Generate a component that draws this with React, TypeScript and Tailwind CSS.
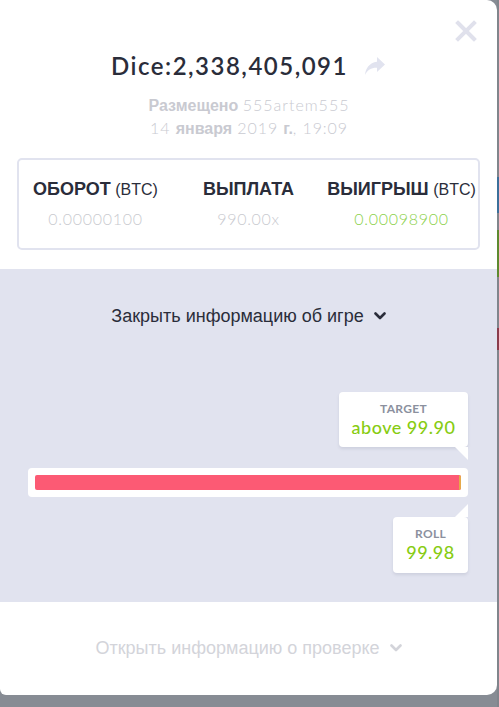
const Chevron = ({ className }: { className?: string }) => (
  <svg width="12" height="8" viewBox="0 0 12 8" className={className} aria-hidden="true">
    <path d="M1.5 1.5L6 6l4.5-4.5" fill="none" stroke="currentColor" strokeWidth="2.6" strokeLinecap="round" strokeLinejoin="round" />
  </svg>
)

const Share = () => (
  <svg width="22" height="20" viewBox="0 0 22 20" aria-hidden="true">
    <path d="M13 1l8 7.5-8 7.5v-4.3C7 11.6 3.6 13.6 1 19c.6-6.8 4.2-12.2 12-13.3z" fill="#e1e3ef" />
  </svg>
)

const Close = () => (
  <svg width="22" height="22" viewBox="0 0 22 22" aria-hidden="true">
    <path d="M3 3l16 16M19 3L3 19" stroke="#e0e1ec" strokeWidth="4" strokeLinecap="square" />
  </svg>
)

function Stat({ label, unit, value, green }: { label: string; unit?: string; value: string; green?: boolean }) {
  return (
    <div className="flex flex-col items-center">
      <div className="whitespace-nowrap font-['Liberation_Sans',sans-serif] leading-[20px] text-[#2a2d3a]">
        <span className="text-[18px] font-bold">{label}</span>
        {unit && <span className="text-[16px]"> {unit}</span>}
      </div>
      <div
        className={`mt-[9px] font-['Lato',sans-serif] text-[16px] font-light leading-[20px] tracking-[0.7px] ${green ? 'text-[#8cd14c]' : 'text-[#c9cacf]'}`}
      >
        {value}
      </div>
    </div>
  )
}

export default function App() {
  return (
    <div className="relative flex h-[707px] w-[499px] overflow-hidden bg-[#878c94]">
      <div className="flex h-[695px] w-[497px] flex-col overflow-hidden rounded-r-[10px] rounded-bl-[6px] bg-white">
        <div className="relative flex flex-col items-center pt-[50px]">
          <button type="button" className="absolute right-[20px] top-[20px]" aria-label="Закрыть">
            <Close />
          </button>
          <div className="flex items-center gap-[16px]">
            <h1 className="font-['Lato',sans-serif] text-[24px] font-semibold leading-[32px] tracking-[1.5px] text-[#2a2d3a]">
              Dice:2,338,405,091
            </h1>
            <Share />
          </div>
          <div className="mt-[12px] flex flex-col items-center pl-[1px] font-['Liberation_Sans',sans-serif] text-[16px] leading-[22px] text-[#c9cad1]">
            <div>
              <span className="font-bold">Размещено</span>{' '}
              <span className="font-['Lato',sans-serif] font-light tracking-[1px]">555artem555</span>
            </div>
            <div>
              <span className="font-['Lato',sans-serif] font-light tracking-[0.9px]">14 </span>
              <span className="font-bold">января</span>
              <span className="font-['Lato',sans-serif] font-light tracking-[0.9px]"> 2019 </span>
              <span className="font-bold">г.</span>
              <span className="font-['Lato',sans-serif] font-light tracking-[0.9px]">, 19:09</span>
            </div>
          </div>
        </div>

        <div className="mx-[17px] mt-[18px] grid h-[92px] grid-cols-3 items-center rounded-[5px] border-2 border-[#e1e3ef] pb-[2px] pt-[2px]">
          <Stat label="ОБОРОТ" unit="(BTC)" value="0.00000100" />
          <Stat label="ВЫПЛАТА" value="990.00x" />
          <Stat label="ВЫИГРЫШ" unit="(BTC)" value="0.00098900" green />
        </div>

        <div className="mt-[19px] flex h-[333px] flex-col bg-[#e1e3ef]">
          <button
            type="button"
            className="mt-[35px] flex items-center justify-center gap-[10px] font-['Liberation_Sans',sans-serif] text-[18px] leading-[24px] text-[#2a2d3a]"
          >
            Закрыть информацию об игре
            <Chevron className="text-[#2a2d3a]" />
          </button>

          <div className="mt-[64px] flex flex-col items-end pr-[29px] pl-[28px]">
            <div className="relative flex h-[55px] w-[129px] flex-col items-center rounded-[4px] bg-white pt-[10px] shadow-[0_2px_3px_rgba(120,125,150,0.18)]">
              <span className="font-['Lato',sans-serif] text-[12px] font-bold leading-[14px] tracking-[0.3px] text-[#8b909e]">TARGET</span>
              <span className="mt-[1px] font-['Lato',sans-serif] text-[18px] font-medium leading-[20px] tracking-[0.5px] text-[#87cc12]">above 99.90</span>
              <span className="absolute right-0 top-full h-[13px] w-[13px] bg-white [clip-path:polygon(0_0,100%_0,100%_100%)]" />
            </div>
            <div className="mt-[21px] flex h-[29px] w-full items-center rounded-[4px] bg-white px-[7px]">
              <div className="flex h-[15px] w-full overflow-hidden rounded-[2px] bg-[#fc5a74]">
                <div className="ml-auto h-full w-[2px] bg-[#e6a94a]" />
              </div>
            </div>
            <div className="relative mt-[20px] flex h-[56px] w-[75px] flex-col items-center rounded-[4px] bg-white pt-[10px] shadow-[0_2px_3px_rgba(120,125,150,0.18)]">
              <span className="absolute bottom-full right-0 h-[13px] w-[13px] bg-white [clip-path:polygon(100%_0,100%_100%,0_100%)]" />
              <span className="font-['Lato',sans-serif] text-[12px] font-bold leading-[14px] tracking-[0.3px] text-[#8b909e]">ROLL</span>
              <span className="mt-[1px] font-['Lato',sans-serif] text-[18px] font-medium leading-[20px] tracking-[0.5px] text-[#87cc12]">99.98</span>
            </div>
          </div>
        </div>

        <div className="flex flex-1 items-center justify-center pb-[2px]">
          <button
            type="button"
            className="flex items-center gap-[10px] font-['Liberation_Sans',sans-serif] text-[18px] leading-[24px] text-[#d3d4da]"
          >
            Открыть информацию о проверке
            <Chevron className="text-[#d3d4da]" />
          </button>
        </div>
      </div>

      <div className="flex w-[2px] flex-col bg-[#80858c]">
        <div className="mt-[177px] h-[36px] bg-[#3b6f9a]" />
        <div className="mt-[17px] h-[47px] bg-[#5d8a2f]" />
        <div className="mt-[51px] h-[22px] bg-[#8a3c4c]" />
      </div>
    </div>
  )
}
